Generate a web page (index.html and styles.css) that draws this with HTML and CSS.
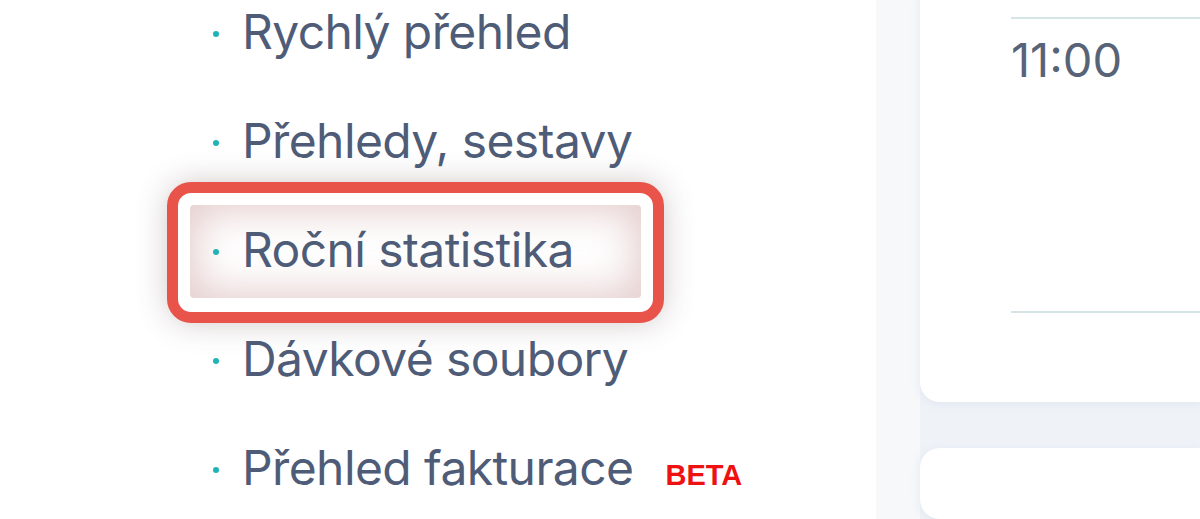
FILE: index.html
```html
<!DOCTYPE html>
<html lang="cs">
<head>
<meta charset="utf-8">
<title>Menu</title>
<link rel="stylesheet" href="styles.css">
</head>
<body>
<div class="page">
  <nav class="menu">
    <ul class="menu-list">
      <li class="menu-item"><span class="dot"></span><span class="label">Rychlý přehled</span></li>
      <li class="menu-item"><span class="dot"></span><span class="label">Přehledy, sestavy</span></li>
      <li class="menu-item is-marked"><span class="mark"></span><span class="dot"></span><span class="label">Roční statistika</span></li>
      <li class="menu-item"><span class="dot"></span><span class="label">Dávkové soubory</span></li>
      <li class="menu-item"><span class="dot"></span><span class="label">Přehled fakturace</span><span class="beta">BETA</span></li>
    </ul>
  </nav>
  <div class="strip"></div>
  <main class="content">
    <section class="card card-top">
      <div class="slot">
        <div class="time">11:00</div>
      </div>
      <div class="slot slot-next"></div>
    </section>
    <section class="card card-bottom"></section>
  </main>
</div>
</body>
</html>
```
FILE: styles.css
```css
html, body {
  margin: 0;
  padding: 0;
}
body {
  width: 1200px;
  height: 519px;
  overflow: hidden;
  background: #ffffff;
  font-family: Inter, "Noto Sans", sans-serif;
}
.page {
  display: flex;
  height: 519px;
}
.menu {
  width: 876px;
  flex: none;
  background: #ffffff;
}
.menu-list {
  list-style: none;
  margin: -23px 0 0 0;
  padding: 0 0 0 213px;
}
.menu-item {
  position: relative;
  height: 109px;
  line-height: 109px;
  font-size: 48px;
  letter-spacing: -0.6px;
  color: #4f5c78;
  white-space: nowrap;
}
.dot {
  position: relative;
  top: -2px;
  z-index: 1;
  display: inline-block;
  width: 6px;
  height: 6px;
  border-radius: 50%;
  background: #1fb3b8;
  vertical-align: middle;
  margin-right: 23px;
}
.label {
  position: relative;
  z-index: 1;
}
.beta {
  position: relative;
  z-index: 1;
  margin-left: 32px;
  font-family: "Liberation Sans", Arial, sans-serif;
  font-weight: 700;
  font-size: 29px;
  letter-spacing: 0;
  color: #ee1111;
}
.mark {
  position: absolute;
  z-index: 0;
  left: -46px;
  top: -13px;
  width: 497px;
  height: 141px;
  box-sizing: border-box;
  border: 11px solid #e8534a;
  border-radius: 24px;
  background: #ffffff;
  box-shadow: 0 0 30px rgba(110, 80, 80, 0.3);
}
.mark::before {
  content: "";
  position: absolute;
  left: 12px;
  top: 12px;
  right: 12px;
  bottom: 14px;
  border-radius: 4px;
  box-shadow: inset 0 0 40px 6px rgba(205, 160, 160, 0.55);
}
.strip {
  width: 44px;
  flex: none;
  background: #f6f8fa;
}
.content {
  flex: 1;
  display: flex;
  flex-direction: column;
  gap: 46px;
  background: #eff3f8;
}
.card {
  background: #ffffff;
  border-radius: 20px 0 0 20px;
  box-shadow: 0 2px 10px rgba(180, 195, 215, 0.25);
}
.card-top {
  margin-top: -20px;
  height: 422px;
  flex: none;
  padding: 37px 0 0 91px;
  box-sizing: border-box;
}
.card-bottom {
  flex: 1;
}
.slot {
  border-top: 2px solid #d5e4e5;
  height: 292px;
  box-sizing: content-box;
}
.slot-next {
  height: 0;
}
.time {
  padding-top: 17px;
  font-size: 47px;
  line-height: 47px;
  color: #586378;
}
```
